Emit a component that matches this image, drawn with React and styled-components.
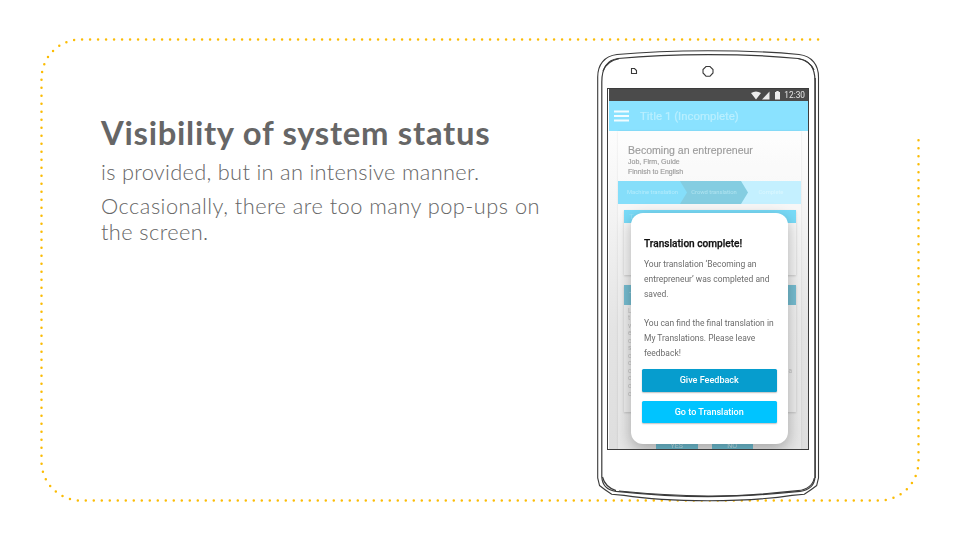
import React from "react";
import styled, { createGlobalStyle } from "styled-components";

const Global = createGlobalStyle`
  * { box-sizing: border-box; }
  body { margin: 0; background: #fff; }
  p, h1, h2 { margin: 0; }
`;

const Slide = styled.main`
  position: relative;
  width: 960px;
  height: 540px;
  overflow: hidden;
  display: flex;
  background: #fff;
`;

const Frame = styled.svg`
  position: absolute;
  inset: 0;
`;

const Copy = styled.section`
  position: relative;
  width: 496px;
  margin-left: 101px;
  padding-top: 112px;
  color: #666;
  font-family: Lato, sans-serif;
  white-space: nowrap;
`;

const Heading = styled.h1`
  font-size: 32.8px;
  line-height: 41px;
  font-weight: 700;
  letter-spacing: ${(p) => p.$track}px;
`;

const Paragraph = styled.p`
  margin-top: ${(p) => p.$gap}px;
  font-size: 21.8px;
  line-height: 26px;
  font-weight: 300;
`;

const Line = styled.span`
  display: block;
  letter-spacing: ${(p) => p.$track}px;
`;

const Phone = styled.section`
  position: relative;
  width: 222px;
  height: 452px;
  margin-top: 50px;
  padding: 38px 0 0 10px;
`;

const Outline = styled.svg`
  position: absolute;
  left: 0;
  top: 0;
`;

const Screen = styled.div`
  position: relative;
  width: 202px;
  height: 362px;
  border: 1px solid #3c3c3c;
  padding-left: 1px;
  overflow: hidden;
  background: #fff;
  font-family: Roboto, sans-serif;
`;

const Backdrop = styled.div`
  height: 360px;
  overflow: hidden;
  background: linear-gradient(#fdfdfd 40px, #f3f3f3 130px, #e4e4e4 240px, #dedede 360px);
  filter: blur(0.4px);
`;

const StatusBar = styled.div`
  height: 12px;
  background: #4b4b4b;
  color: #e6e6e6;
  display: flex;
  align-items: center;
  justify-content: flex-end;
  gap: 3px;
  padding-right: 3px;
  font-size: 8.3px;
  line-height: 12px;
`;

const AppBar = styled.div`
  height: 30px;
  background: #8ae2ff;
  display: flex;
  align-items: center;
  gap: 11px;
  padding-left: 5px;
  color: #b9efff;
  font-size: 11.4px;
  -webkit-text-stroke: 0.2px #b9efff;
`;

const Sheet = styled.div`
  width: 183px;
  height: 330px;
  margin-left: 9px;
  background: rgba(255, 255, 255, 0.25);
  box-shadow: 0 0 2px rgba(0, 0, 0, 0.1);
`;

const Job = styled.div`
  height: 50px;
  padding: 13px 0 0 10px;
  color: #9c9c9c;
  font-family: "Liberation Sans", sans-serif;
  font-size: 7px;
  line-height: 10px;
  white-space: nowrap;
  -webkit-text-stroke: 0.15px #9c9c9c;
`;

const JobTitle = styled.h2`
  font-size: 10.55px;
  line-height: 12.5px;
  font-weight: 400;
`;

const Steps = styled.div`
  height: 23px;
  display: flex;
  background: #c4f0ff;
`;

const Step = styled.div`
  width: ${(p) => p.$width}px;
  margin-right: ${(p) => p.$overlap || 0}px;
  z-index: ${(p) => p.$layer};
  background: ${(p) => p.$color};
  color: ${(p) => p.$ink};
  clip-path: ${(p) => (p.$last ? "none" : "polygon(0 0, calc(100% - 7px) 0, 100% 50%, calc(100% - 7px) 100%, 0 100%)")};
  font-size: 5.8px;
  line-height: 23px;
  text-align: center;
  white-space: nowrap;
`;

const Section = styled.div`
  width: 172px;
  height: ${(p) => p.$height}px;
  margin: ${(p) => p.$top}px 0 0 6px;
  background: rgba(255, 255, 255, 0.22);
  box-shadow: 0 1px 2px rgba(0, 0, 0, 0.16);
`;

const SectionBar = styled.div`
  height: ${(p) => p.$height}px;
  background: ${(p) => p.$color};
  color: ${(p) => p.$ink};
  padding-left: 5px;
  font-size: 8px;
  line-height: ${(p) => p.$height}px;
`;

const Excerpt = styled.div`
  display: flex;
  justify-content: space-between;
  padding: 3px 4px;
  color: #c2c2c2;
  font-size: 6.5px;
  line-height: 7.55px;
  white-space: pre-line;
`;

const Answers = styled.div`
  display: flex;
  gap: 14px;
  margin: 31px 0 0 38px;
`;

const Answer = styled.div`
  width: 41.5px;
  height: 14px;
  background: #6fbfd3;
  color: #c0e1e9;
  text-align: center;
  font-size: 7px;
  line-height: 7px;
`;

const Dialog = styled.div`
  position: absolute;
  left: 23px;
  top: 123.5px;
  width: 157px;
  height: 231px;
  padding: 24.5px 10.5px 0;
  border-radius: 12px;
  background: #fff;
  box-shadow: 0 5px 15px rgba(0, 0, 0, 0.29);
  filter: blur(0.3px);
`;

const DialogTitle = styled.h2`
  padding-left: 2.5px;
  color: #111;
  font-size: 10.1px;
  line-height: 14px;
  font-weight: 500;
  -webkit-text-stroke: 0.25px #111;
  white-space: nowrap;
`;

const Message = styled.p`
  margin-top: ${(p) => p.$gap}px;
  padding-left: 2.5px;
  color: #6c6c6c;
  font-size: 8.47px;
  line-height: 14.8px;
  white-space: nowrap;
`;

const Button = styled.button`
  display: block;
  width: 135.5px;
  height: 22.5px;
  margin: ${(p) => p.$gap}px 0 0;
  padding: 0;
  border: 0;
  border-radius: 1.5px;
  background: ${(p) => p.$color};
  box-shadow: 0 1px 1.5px rgba(0, 0, 0, 0.25);
  color: #fff;
  font: 500 9.05px/23px Roboto, sans-serif;
`;

export default function App() {
  return (
    <>
      <Global />
      <Slide>
        <Frame width="960" height="540" fill="none">
          <path
            d="M918.5 140.3V461.3A39.2 39.2 0 0 1 879.3 500.5H80.7A39.2 39.2 0 0 1 41.5 461.3V78.7A39.2 39.2 0 0 1 80.7 39.5H820"
            stroke="#fbbc05"
            strokeWidth="2.5"
            strokeLinecap="round"
            strokeDasharray="0 8"
          />
        </Frame>
        <Copy>
          <Heading $track={0.71}>Visibility of system status</Heading>
          <Paragraph $gap={6}>
            <Line $track={0.3}>is provided, but in an intensive manner.</Line>
          </Paragraph>
          <Paragraph $gap={8}>
            <Line $track={0.47}>Occasionally, there are too many pop-ups on</Line>
            <Line $track={0.4}>the screen.</Line>
          </Paragraph>
        </Copy>
        <Phone>
          <Outline width="224" height="453" fill="none" stroke="#3a3a3a">
            <path
              fill="#fff"
              strokeWidth="1.1"
              d="M.7 27C.7 15 7 6 20 4.5C48 1.8 80 .7 111 .7S174 1.8 202 4.5C215 6 221.5 15 221.5 27V428L219.7 435.5Q214 440 207.3 444.3L195 445.4C172 449 142 450.7 111 450.7S50 449 27 445.4L14.700 444.3Q8 440 2.500 435.5L.7 428Z"
            />
            <path
              strokeWidth="1.2"
              d="M4.8 32C4.8 19 10 10 21 8.5C49 5.8 80 4.6 111 4.6S174 5.8 201 8.5C212 10 218 18 218 31V427C217.500 435 213 440 203 441.3C172 444.5 142 446.6 111 446.6S50 444.5 19 441.3C9 440 5.300 435 4.8 427Z"
            />
            <path strokeWidth="1.2" d="M218.2 28V428M22 441C50 443.8 80 445.7 111 446S172 443.8 201 440.7Q215 439 217.3 428M5.500 427Q8 437 19 440.600M6 21Q10 11 22 8.7M201 8.5Q213 11 217 20" />
            <path strokeWidth="1.1" d="M34.5 18.5H37.5L39.5 20.5V23.5H34.5ZM109 16.5H113L116 19.5V23L113 26.2H109L106 23V19.5Z" />
          </Outline>
          <Screen>
            <Backdrop>
              <StatusBar>
                <svg width="30" height="9" fill="#ececec">
                  <path d="M0 2Q5-1 10 2L5 8.500ZM11 8.500L18.500 .5V8.500ZM24 1H25.300V0H27.700V1H29V8.500H24Z" />
                </svg>
                12:30
              </StatusBar>
              <AppBar>
                <svg width="15" height="12" stroke="#f2fcff" strokeWidth="2.2">
                  <path d="M0 1.5H15M0 6H15M0 10.5H15" />
                </svg>
                Title 1 (Incomplete)
              </AppBar>
              <Sheet>
                <Job>
                  <JobTitle>Becoming an entrepreneur</JobTitle>
                  Job, Firm, Guide
                  <br />
                  Finnish to English
                </Job>
                <Steps>
                  <Step $width={69} $overlap={-7} $layer={2} $color="#85defa" $ink="#b4ecfc">Machine translation</Step>
                  <Step $width={68} $overlap={-7} $layer={1} $color="#84cde1" $ink="#b0e4f0">Crowd translation</Step>
                  <Step $width={60} $layer={0} $color="#c4f0ff" $ink="#daf7ff" $last>Complete</Step>
                </Steps>
                <Section $top={6} $height={65}>
                  <SectionBar $height={13} $color="#79dbf8" $ink="#96e4fb">T</SectionBar>
                </Section>
                <Section $top={10} $height={127}>
                  <SectionBar $height={19.5} $color="#76bdd1" $ink="#b4dde8">T</SectionBar>
                  <Excerpt>
                    <span>{"L\nt\nv\ne\nc\ns\nc\nc\nc\nc\nc\nc"}</span>
                    <span>{"\n\n\n\n\n\n\n\na"}</span>
                  </Excerpt>
                </Section>
                <Answers>
                  <Answer>YES</Answer>
                  <Answer>NO</Answer>
                </Answers>
              </Sheet>
            </Backdrop>
            <Dialog>
              <DialogTitle>Translation complete!</DialogTitle>
              <Message $gap={6}>
                Your translation ‘Becoming an
                <br />
                entrepreneur’ was completed and
                <br />
                saved.
              </Message>
              <Message $gap={14.8}>
                You can find the final translation in
                <br />
                My Translations. Please leave
                <br />
                feedback!
              </Message>
              <Button $gap={8.5} $color="#069dce">Give Feedback</Button>
              <Button $gap={9} $color="#00c4ff">Go to Translation</Button>
            </Dialog>
          </Screen>
        </Phone>
      </Slide>
    </>
  );
}
